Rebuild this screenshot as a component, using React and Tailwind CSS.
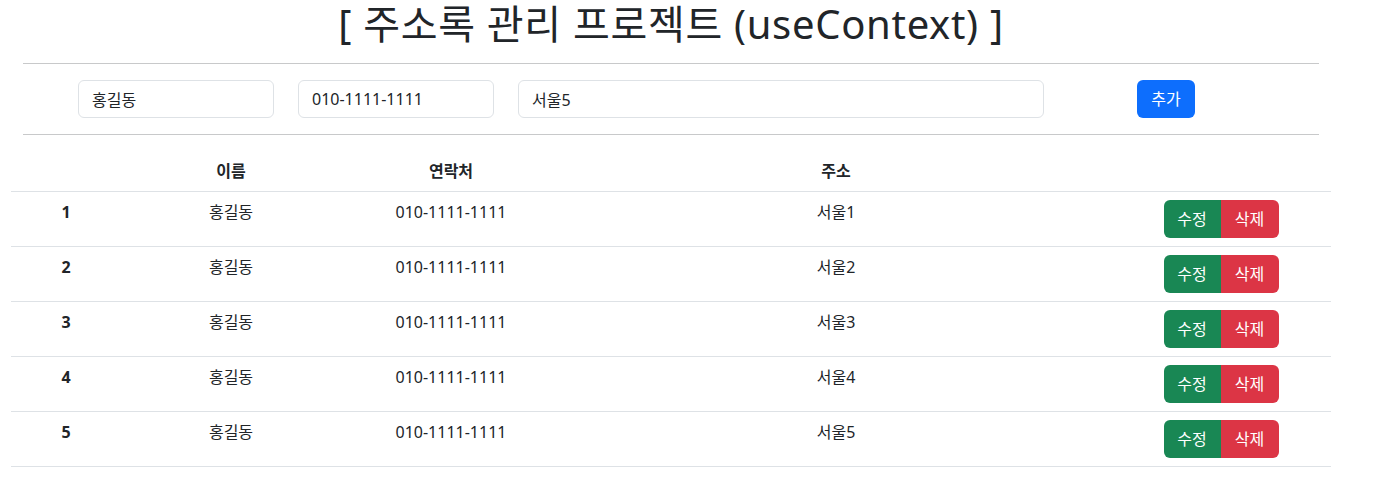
import React from "react";

const rows = [1, 2, 3, 4, 5].map((n) => ({
  id: n,
  name: "홍길동",
  phone: "010-1111-1111",
  addr: "서울" + n,
}));

export default function App() {
  return (
    <div
      className="w-[1378px] bg-white text-[#212529] text-[16px]"
      style={{ fontFamily: '"Noto Sans", "Noto Sans CJK KR", sans-serif' }}
    >
      <div className="w-[1342px] pt-[1px]">
        <h1 className="-mt-[6px] text-center text-[40px] leading-[58px] font-normal tracking-[0.7px]">
          [ 주소록 관리 프로젝트 (useContext) ]
        </h1>
        <div className="mx-[23px] mt-[10px] w-[1296px] border-t border-[#c8c9ca]" />
        <div className="ml-[78px] mt-[16px] flex h-[38px] items-center">
          <input
            readOnly
            value="홍길동"
            className="h-[38px] w-[196px] rounded-[6px] border border-[#dee2e6] px-[13px] text-[16px] text-[#212529] outline-none"
          />
          <input
            readOnly
            value="010-1111-1111"
            className="ml-[24px] h-[38px] w-[196px] rounded-[6px] border border-[#dee2e6] px-[13px] text-[16px] text-[#212529] outline-none"
          />
          <input
            readOnly
            value="서울5"
            className="ml-[24px] h-[38px] w-[526px] rounded-[6px] border border-[#dee2e6] px-[13px] text-[16px] text-[#212529] outline-none"
          />
          <button className="ml-[93px] h-[38px] w-[58px] rounded-[6px] bg-[#0d6efd] text-[16px] text-white">
            추가
          </button>
        </div>
        <div className="mx-[23px] mt-[16px] w-[1296px] border-t border-[#c8c9ca]" />
        <table className="ml-[11px] mt-[16px] w-[1320px] table-fixed border-collapse text-center">
          <colgroup>
            <col className="w-[110px]" />
            <col className="w-[220px]" />
            <col className="w-[220px]" />
            <col className="w-[550px]" />
            <col className="w-[220px]" />
          </colgroup>
          <thead>
            <tr className="border-b border-[#dee2e6]">
              <th className="px-2 py-2 leading-[24px] font-bold"></th>
              <th className="px-2 py-2 leading-[24px] font-bold">이름</th>
              <th className="px-2 py-2 leading-[24px] font-bold">연락처</th>
              <th className="px-2 py-2 leading-[24px] font-bold">주소</th>
              <th className="px-2 py-2 leading-[24px] font-bold"></th>
            </tr>
          </thead>
          <tbody>
            {rows.map((r) => (
              <tr key={r.id} className="border-b border-[#dee2e6]">
                <th className="px-2 py-2 align-top leading-[24px] font-bold">{r.id}</th>
                <td className="px-2 py-2 align-top leading-[24px]">{r.name}</td>
                <td className="px-2 py-2 align-top leading-[24px]">{r.phone}</td>
                <td className="px-2 py-2 align-top leading-[24px]">{r.addr}</td>
                <td className="px-2 py-2 align-top">
                  <div className="inline-flex h-[38px] overflow-hidden rounded-[6px] align-top">
                    <button className="h-[38px] w-[57px] bg-[#198754] text-[16px] text-white">
                      수정
                    </button>
                    <button className="h-[38px] w-[58px] bg-[#dc3545] text-[16px] text-white">
                      삭제
                    </button>
                  </div>
                </td>
              </tr>
            ))}
          </tbody>
        </table>
      </div>
    </div>
  );
}
